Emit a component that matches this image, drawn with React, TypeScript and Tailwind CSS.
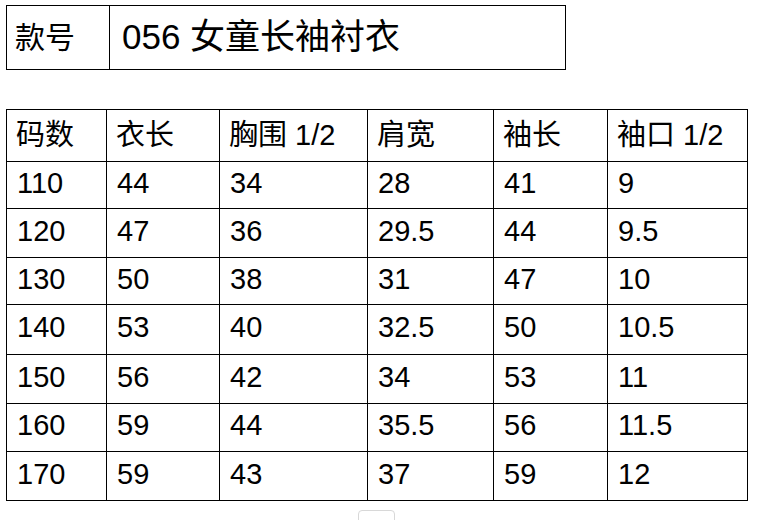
import React from "react";

const font = { fontFamily: '"Liberation Sans", "Noto Sans CJK SC", sans-serif' };

const headers = ["码数", "衣长", "胸围 1/2", "肩宽", "袖长", "袖口 1/2"];

const rows = [
  ["110", "44", "34", "28", "41", "9"],
  ["120", "47", "36", "29.5", "44", "9.5"],
  ["130", "50", "38", "31", "47", "10"],
  ["140", "53", "40", "32.5", "50", "10.5"],
  ["150", "56", "42", "34", "53", "11"],
  ["160", "59", "44", "35.5", "56", "11.5"],
  ["170", "59", "43", "37", "59", "12"],
];

const colWidths = ["w-[100px]", "w-[113px]", "w-[148px]", "w-[126px]", "w-[114px]", "w-[140px]"];
const rowHeights = ["h-[47px]", "h-[49px]", "h-[47px]", "h-[50px]", "h-[49px]", "h-[48px]", "h-[49px]"];

export default function App() {
  return (
    <div className="relative h-[520px] w-[757px] overflow-hidden bg-white text-black" style={font}>
      <div className="pl-[6px] pt-[5px]">
        {/* Style number box */}
        <div className="flex h-[65px] w-[560px] border border-black">
          <div className="flex w-[103px] items-center border-r border-black pl-[8px] text-[30px]">款号</div>
          <div className="flex items-center pl-[12px] text-[35px]">056 女童长袖衬衣</div>
        </div>

        {/* Size chart */}
        <table className="mt-[39px] w-[742px] table-fixed border-collapse">
          <colgroup>
            {colWidths.map((w, i) => (
              <col key={i} className={w} />
            ))}
          </colgroup>
          <thead>
            <tr className="h-[52px]">
              {headers.map((h) => (
                <th key={h} className="border border-black pl-[9px] text-left text-[29px] font-normal">
                  {h}
                </th>
              ))}
            </tr>
          </thead>
          <tbody>
            {rows.map((r, i) => (
              <tr key={i} className={rowHeights[i]}>
                {r.map((c, j) => (
                  <td key={j} className="border border-black pb-[4px] pl-[10px] text-[29px] leading-none">
                    {c}
                  </td>
                ))}
              </tr>
            ))}
          </tbody>
        </table>
      </div>

      {/* faint overlay button at bottom */}
      <div className="absolute left-[358px] top-[510px] h-[20px] w-[37px] rounded-[4px] border border-[#d8d8d8] bg-white" />
    </div>
  );
}
